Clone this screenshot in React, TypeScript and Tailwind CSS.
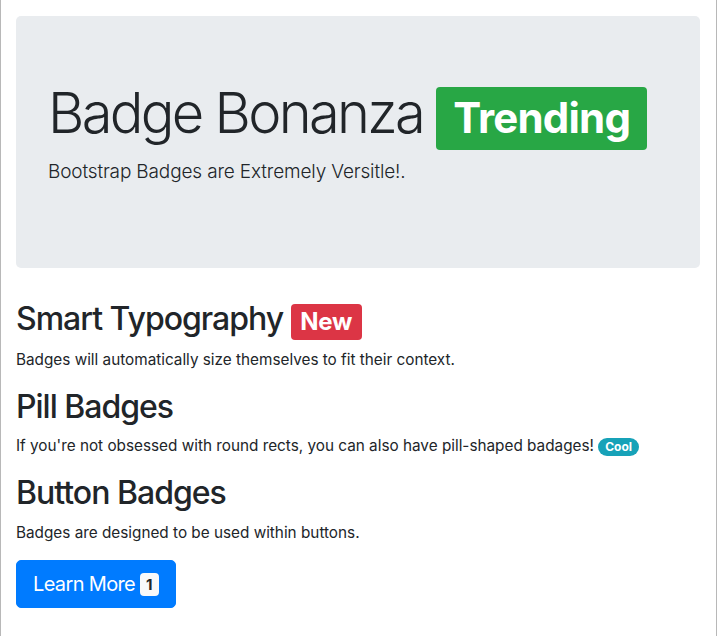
import React from "react";

const FONT = { fontFamily: "Inter, 'Noto Sans', 'Liberation Sans', sans-serif" };

function Badge({
  children,
  className,
}: {
  children: React.ReactNode;
  className: string;
}) {
  return (
    <span
      className={
        "inline-block font-bold leading-none text-center whitespace-nowrap align-baseline " +
        className
      }
    >
      {children}
    </span>
  );
}

export default function App() {
  return (
    <div
      style={FONT}
      className="w-[717px] min-h-screen bg-white text-[#212529] border-l border-r border-[#b8b8b8] p-4 pl-[15px]"
    >
      {/* Jumbotron */}
      <div className="bg-[#e9ecef] rounded-[5px] px-8 pt-16 pb-[66px] mb-8">
        <h1 className="text-[56px] font-light leading-[1.2] tracking-[-2.7px] mb-2 whitespace-nowrap">
          Badge Bonanza{" "}
          <Badge className="text-[42px] px-[17px] py-[10.5px] rounded-[4px] bg-[#28a745] text-white tracking-[-0.8px]">
            Trending
          </Badge>
        </h1>
        <p className="text-[19px] font-light leading-[1.5] tracking-[-0.15px] mb-4">
          Bootstrap Badges are Extremely Versitle!.
        </p>
      </div>

      <h2 className="text-[32px] font-medium leading-[1.2] tracking-[-1px] mb-2">
        Smart Typography{" "}
        <Badge className="text-[24px] px-[9.6px] py-[6px] rounded-[4px] bg-[#dc3545] text-white tracking-[-0.3px]">
          New
        </Badge>
      </h2>
      <p className="text-[15.3px] leading-[24px] mb-4">
        Badges will automatically size themselves to fit their context.
      </p>

      <h2 className="text-[32px] font-medium leading-[1.2] tracking-[-1px] mb-2">Pill Badges</h2>
      <p className="text-[15.3px] leading-[24px] mb-4">
        If you're not obsessed with round rects, you can also have pill-shaped
        badages!{" "}
        <Badge className="text-[12px] px-[7px] py-[3px] rounded-full bg-[#17a2b8] text-white">
          Cool
        </Badge>
      </p>

      <h2 className="text-[32px] font-medium leading-[1.2] tracking-[-1px] mb-2">Button Badges</h2>
      <p className="text-[15.3px] leading-[24px] mb-[15px]">
        Badges are designed to be used within buttons.
      </p>
      <button className="bg-[#007bff] text-white text-[20px] leading-[30px] tracking-[-0.65px] px-4 py-2 border border-[#007bff] rounded-[5px]">
        Learn More{" "}
        <Badge className="relative -top-px text-[15px] px-[6px] py-[4px] rounded-[4px] bg-[#f8f9fa] text-[#212529] tracking-normal">
          1
        </Badge>
      </button>
    </div>
  );
}
